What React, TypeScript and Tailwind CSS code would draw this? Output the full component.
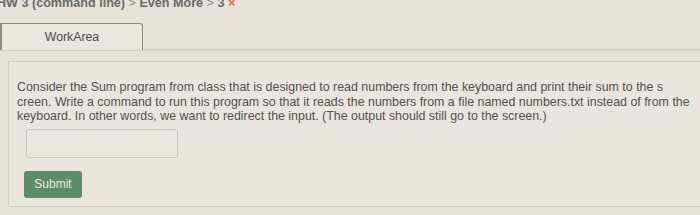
export default function App() {
  return (
    <div
      className="w-[700px] h-[215px] overflow-hidden bg-[#e8e3d9] text-[#58544f] relative"
      style={{ fontFamily: '"Liberation Sans", Arial, sans-serif' }}
    >
      <div className="h-[10px] overflow-hidden">
        <div className="-mt-[4px] -ml-[3px] text-[12.6px] font-bold text-[#6c6a68] whitespace-nowrap leading-[14px]">
          HW 3 (command line) <span className="text-[#8d8a86] font-normal">&gt;</span> Even More <span className="text-[#8d8a86] font-normal">&gt;</span> 3 <span className="text-[#e26a5c]">×</span>
        </div>
      </div>
      <div className="mt-[13px] flex items-end">
        <div className="w-[143px] h-[27px] border-t-[1.5px] border-r-[1.5px] border-l-[2px] border-[#8f8a84] rounded-tr-[3px] flex items-center justify-center text-[12.3px] text-[#4f4b47] bg-[#ebe7de]">
          WorkArea
        </div>
        <div className="flex-1 border-b border-[#cfc9bf]"></div>
      </div>
      <div className="border-t border-[#d8d2c8]"></div>
      <div className="ml-[8px] mt-[10px] h-[146px] border-l border-t border-b border-[#d3cdc3] bg-[#ebe6dd] pl-[8px] pt-[18px]">
        <p className="text-[12.4px] leading-[14.5px] text-[#55514c] whitespace-nowrap">
          Consider the Sum program from class that is designed to read numbers from the keyboard and print their sum to the s
          <br />
          creen. Write a command to run this program so that it reads the numbers from a file named numbers.txt instead of from the
          <br />
          keyboard. In other words, we want to redirect the input. (The output should still go to the screen.)
        </p>
        <div className="mt-[5px] ml-[9px] w-[152px] h-[29px] border border-[#cdc7bd] rounded-[3px] bg-[#ebe7df]"></div>
        <div className="mt-[13px] ml-[7px] w-[58px] h-[27px] rounded-[3px] bg-[#5e8c66] flex items-center justify-center text-[12px] text-[#e2ebe0]">
          Submit
        </div>
      </div>
    </div>
  );
}
